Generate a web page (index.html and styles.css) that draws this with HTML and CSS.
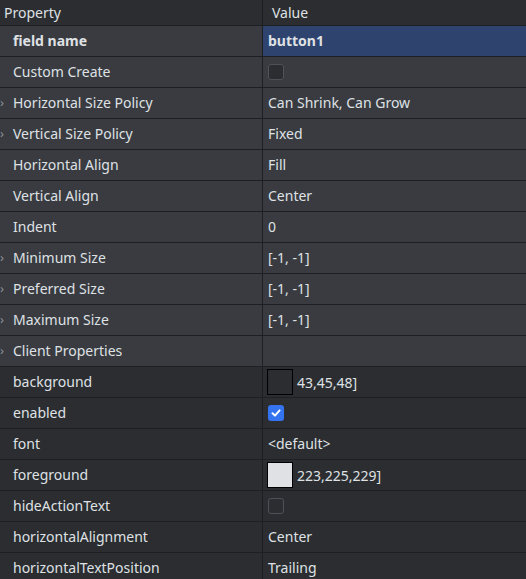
FILE: index.html
```html
<!DOCTYPE html>
<html>
<head>
<meta charset="utf-8">
<link rel="stylesheet" href="styles.css">
</head>
<body>
<div class="table">
  <div class="row head">
    <div class="cell name">Property</div>
    <div class="cell val">Value</div>
  </div>
  <div class="row light">
    <div class="cell name bold">field name</div>
    <div class="cell val sel bold">button1</div>
  </div>
  <div class="row light">
    <div class="cell name">Custom Create</div>
    <div class="cell val"><span class="cb"></span></div>
  </div>
  <div class="row light">
    <div class="cell name"><span class="chev">›</span>Horizontal Size Policy</div>
    <div class="cell val">Can Shrink, Can Grow</div>
  </div>
  <div class="row light">
    <div class="cell name"><span class="chev">›</span>Vertical Size Policy</div>
    <div class="cell val">Fixed</div>
  </div>
  <div class="row light">
    <div class="cell name">Horizontal Align</div>
    <div class="cell val">Fill</div>
  </div>
  <div class="row light">
    <div class="cell name">Vertical Align</div>
    <div class="cell val">Center</div>
  </div>
  <div class="row light">
    <div class="cell name">Indent</div>
    <div class="cell val">0</div>
  </div>
  <div class="row light">
    <div class="cell name"><span class="chev">›</span>Minimum Size</div>
    <div class="cell val">[-1, -1]</div>
  </div>
  <div class="row light">
    <div class="cell name"><span class="chev">›</span>Preferred Size</div>
    <div class="cell val">[-1, -1]</div>
  </div>
  <div class="row light">
    <div class="cell name"><span class="chev">›</span>Maximum Size</div>
    <div class="cell val">[-1, -1]</div>
  </div>
  <div class="row light">
    <div class="cell name"><span class="chev">›</span>Client Properties</div>
    <div class="cell val"></div>
  </div>
  <div class="row">
    <div class="cell name">background</div>
    <div class="cell val swcell"><span class="sw dark"></span>43,45,48]</div>
  </div>
  <div class="row">
    <div class="cell name">enabled</div>
    <div class="cell val"><span class="cb on"><svg viewBox="0 0 16 16" width="16" height="16"><path d="M4.5 8.2 L7 10.6 L11.6 5.4" fill="none" stroke="#fff" stroke-width="2" stroke-linecap="round" stroke-linejoin="round"/></svg></span></div>
  </div>
  <div class="row">
    <div class="cell name">font</div>
    <div class="cell val">&lt;default&gt;</div>
  </div>
  <div class="row">
    <div class="cell name">foreground</div>
    <div class="cell val swcell"><span class="sw light-sw"></span>223,225,229]</div>
  </div>
  <div class="row">
    <div class="cell name">hideActionText</div>
    <div class="cell val"><span class="cb"></span></div>
  </div>
  <div class="row">
    <div class="cell name">horizontalAlignment</div>
    <div class="cell val">Center</div>
  </div>
  <div class="row">
    <div class="cell name">horizontalTextPosition</div>
    <div class="cell val">Trailing</div>
  </div>
</div>
</body>
</html>
```
FILE: styles.css
```css
html, body {
  margin: 0;
  padding: 0;
  background: #2b2d30;
}
body {
  width: 526px;
  height: 579px;
  overflow: hidden;
  font-family: "Noto Sans", "DejaVu Sans", sans-serif;
  font-size: 14px;
  color: #dfe1e5;
}
.table {
  display: flex;
  flex-direction: column;
}
.row {
  display: grid;
  grid-template-columns: 263px 1fr;
  height: 30px;
  border-bottom: 1px solid #1e1f22;
  background: #2b2d30;
}
.row.head {
  height: 25px;
  border-bottom: 1px solid #1e1f22;
}
.row.light {
  background: #393b40;
}
.cell {
  display: flex;
  align-items: center;
  white-space: nowrap;
  overflow: hidden;
  padding-bottom: 1px;
  box-sizing: border-box;
}
.cell.name {
  position: relative;
  padding-left: 13px;
  border-right: 1px solid #1e1f22;
}
.head .cell.name {
  padding-left: 4px;
}
.cell.val {
  padding-left: 5px;
}
.head .cell.val {
  padding-left: 9px;
}
.sel {
  background: #2e436e;
}
.bold {
  font-weight: bold;
}
.chev {
  position: absolute;
  left: 0;
  top: 5px;
  color: #8c8f94;
  font-size: 13px;
}
.cb {
  width: 14px;
  height: 14px;
  border: 1px solid #4e5157;
  border-radius: 3px;
  background: #2b2d30;
  display: flex;
  align-items: center;
  justify-content: center;
}
.cb.on {
  width: 16px;
  height: 16px;
  border: none;
  background: #3574f0;
}
.cell.val.swcell {
  padding-left: 4px;
  padding-bottom: 0;
  gap: 4px;
}
.sw {
  width: 24px;
  height: 24px;
  border: 1px solid #000;
  box-sizing: content-box;
}
.sw.dark {
  background: #2b2d30;
}
.sw.light-sw {
  background: #dfe1e5;
}
```
